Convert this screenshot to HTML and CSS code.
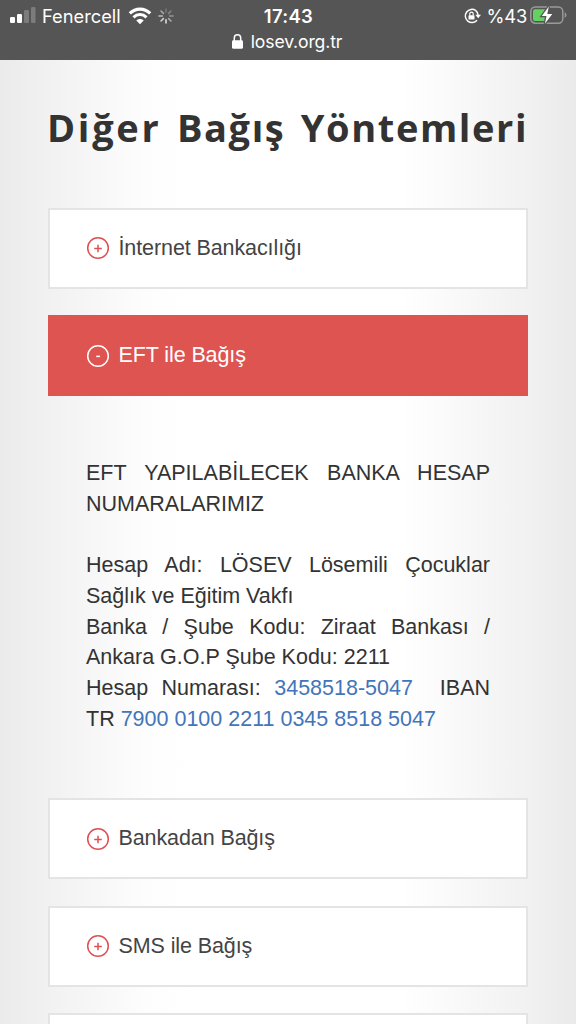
FILE: index.html
```html
<!DOCTYPE html>
<html lang="tr">
<head>
<meta charset="utf-8">
<title>Diğer Bağış Yöntemleri</title>
<link rel="stylesheet" href="styles.css">
</head>
<body>
<header class="status">
  <div class="status-row">
    <div class="status-left">
      <svg class="signal" width="26" height="18" viewBox="0 0 26 18"><rect x="0" y="11" width="5" height="6" rx="1.3" fill="#fff"/><rect x="7" y="8" width="5" height="9" rx="1.3" fill="#fff"/><rect x="14" y="4" width="5" height="13" rx="1.3" fill="#7c7c7c"/><rect x="21" y="1" width="4.5" height="16" rx="1.3" fill="#7c7c7c"/></svg>
      <span class="carrier">Fenercell</span>
      <svg class="wifi" width="24" height="18" viewBox="0 0 24 18" fill="none" stroke="#fff"><path d="M1.8 6.3C7.6.6 16.4.6 22.2 6.3" stroke-width="3.2"/><path d="M5.5 10.3c3.7-3.6 9.3-3.6 13 0" stroke-width="3"/><path d="M12 17.3 8.3 13.5c2.1-2 5.3-2 7.4 0z" fill="#fff" stroke="none"/></svg>
      <svg class="spinner" width="16" height="16" viewBox="-8 -8 16 16" stroke-width="1.5" stroke-linecap="round"><path d="M0-3.7V-7" stroke="#787878"/><path d="M2.6-2.6 5-5" stroke="#858585"/><path d="M3.7 0H7" stroke="#969696"/><path d="M2.6 2.6 5 5" stroke="#aaa"/><path d="M0 3.7V7" stroke="#e4e4e4"/><path d="M-2.6 2.6-5 5" stroke="#d2d2d2"/><path d="M-3.7 0H-7" stroke="#bebebe"/><path d="M-2.6-2.6-5-5" stroke="#aaa"/></svg>
    </div>
    <div class="clock">17:43</div>
    <div class="status-right">
      <svg width="17" height="16" viewBox="0 0 17 16"><path d="M11.8 2.6A6.6 6.6 0 1 0 13 12.2" fill="none" stroke="#fff" stroke-width="1.5"/><path d="M11.8 2.6a6.6 6.6 0 0 1 2.3 4.4" fill="none" stroke="#fff" stroke-width="1.5"/><path d="M11.3 6.8H17l-2.8 3.5z" fill="#fff"/><rect x="4.5" y="7.2" width="6" height="4.4" rx=".7" fill="#fff"/><path d="M5.8 7.4V5.8a1.7 1.7 0 0 1 3.4 0v1.6" fill="none" stroke="#fff" stroke-width="1.2"/></svg>
      <span class="percent">%43</span>
      <svg class="battery" width="37" height="20" viewBox="0 0 37 20"><rect x=".8" y="2" width="32" height="16.2" rx="4.5" fill="none" stroke="#9a9a9a" stroke-width="1.5"/><path d="M34.7 7.3c2.3 1 2.3 4.6 0 5.6z" fill="#9a9a9a"/><path d="M5 4.2h9.8V16H5a2 2 0 0 1-2-2V6.2a2 2 0 0 1 2-2z" fill="#63d263"/><path d="M18.8 1.5 11.8 11h4.7l-1.6 7.8L22.3 9h-5z" fill="#fff" stroke="#555" stroke-width="2.4" paint-order="stroke"/></svg>
    </div>
  </div>
  <div class="address">
    <svg width="11" height="15" viewBox="0 0 11 15"><rect x="0" y="6.2" width="11" height="8.6" rx="1.4" fill="#fff"/><path d="M2.3 7V4a3.2 3.2 0 0 1 6.4 0v3" fill="none" stroke="#fff" stroke-width="1.5"/></svg>
    <span class="host">losev.org.tr</span>
  </div>
</header>
<main class="page">
  <h1 class="title"><span class="title-lead">Diğer</span> Bağış Yöntemleri</h1>
  <section class="card">
    <svg class="toggle" viewBox="0 0 24 24"><circle cx="12" cy="12" r="10.3"/><path d="M8.2 12.5h7.6M12 8.7v7.6"/></svg>
    <span class="label">İnternet Bankacılığı</span>
  </section>
  <section class="card card-open">
    <svg class="toggle" viewBox="0 0 24 24"><circle cx="12" cy="12" r="10.3"/><path d="M10.2 12.4h3.8"/></svg>
    <span class="label">EFT ile Bağış</span>
  </section>
  <div class="details">
    <p class="text">EFT YAPILABİLECEK BANKA HESAP NUMARALARIMIZ</p>
    <p class="text">Hesap Adı: LÖSEV Lösemili Çocuklar Sağlık ve Eğitim Vakfı</p>
    <p class="text">Banka / Şube Kodu: Ziraat Bankası / Ankara G.O.P Şube Kodu: 2211</p>
    <p class="text">Hesap Numarası: <a class="link">3458518-5047</a> &nbsp;IBAN TR&nbsp;<a class="link">7900 0100 2211 0345 8518 5047</a></p>
  </div>
  <section class="card">
    <svg class="toggle" viewBox="0 0 24 24"><circle cx="12" cy="12" r="10.3"/><path d="M8.2 12.5h7.6M12 8.7v7.6"/></svg>
    <span class="label">Bankadan Bağış</span>
  </section>
  <section class="card">
    <svg class="toggle" viewBox="0 0 24 24"><circle cx="12" cy="12" r="10.3"/><path d="M8.2 12.5h7.6M12 8.7v7.6"/></svg>
    <span class="label">SMS ile Bağış</span>
  </section>
  <section class="card"></section>
</main>
</body>
</html>
```
FILE: styles.css
```css
* { box-sizing: border-box; }
html, body { height: 1024px; overflow: hidden; }
body { margin: 0; font-family: "Liberation Sans", Arial, sans-serif; }
svg { display: block; flex: none; }

.status { height: 60px; background: #555; color: #fff; font-family: Inter, sans-serif; }
.status-row { display: grid; grid-template-columns: 1fr 60px 1fr; height: 32px; padding: 0 9px 0 10px; align-items: center; }
.status-left, .status-right { display: flex; align-items: center; }
.status-right { justify-content: flex-end; }
.signal { margin-top: -2px; }
.carrier { margin-left: 6px; width: 80px; font-size: 18.3px; }
.wifi { margin-left: 6px; }
.spinner { margin-left: 6px; }
.clock { text-align: center; font-size: 18.5px; font-weight: 600; letter-spacing: 0.3px; }
.percent { margin: 0 3px 0 6px; font-size: 18.3px; letter-spacing: -0.2px; }
.battery { margin: -2px 0 0; }
.address { display: flex; justify-content: center; align-items: center; gap: 8px; height: 19px; padding-right: 2px; }
.host { font-size: 17.6px; line-height: 19px; letter-spacing: -0.15px; }

.page {
  display: flex; flex-direction: column; height: 964px; padding: 0 48px; overflow: hidden;
  background: linear-gradient(90deg, #ebebeb 0, #f1f1f1 48px, #fdfdfd 144px, #fff 190px, #fff 400px, #fafafa 450px, #f1f1f1 528px, #eaeaea 576px);
}
.title {
  flex: none; margin: 38px -10px 0 -1px; height: 109.5px; color: #333; white-space: nowrap;
  font: 700 38px/58px "Open Sans", sans-serif; letter-spacing: 1.6px; word-spacing: 4px;
}
.title-lead { letter-spacing: 2.7px; }
.card {
  display: flex; flex: none; align-items: center; height: 81px; margin-bottom: 26.5px; padding-left: 36px;
  border: 2px solid #e4e4e4; background: #fff; color: #444;
}
.card-open { margin-bottom: 0; border-color: #de5450; background: #de5450; color: #fff; }
.toggle { width: 24px; height: 24px; fill: none; stroke: #de5054; stroke-width: 1.5; }
.card-open .toggle { stroke: #fff; }
.label { margin-left: 8.5px; font-size: 21.5px; letter-spacing: -0.1px; }
.details { flex: none; padding: 62px 38px 64px; color: #333; }
.text { margin: 0; font-size: 21.5px; line-height: 30.7px; text-align: justify; }
.text:first-child { margin-bottom: 30.7px; }
.link { color: #4275b9; }
```
